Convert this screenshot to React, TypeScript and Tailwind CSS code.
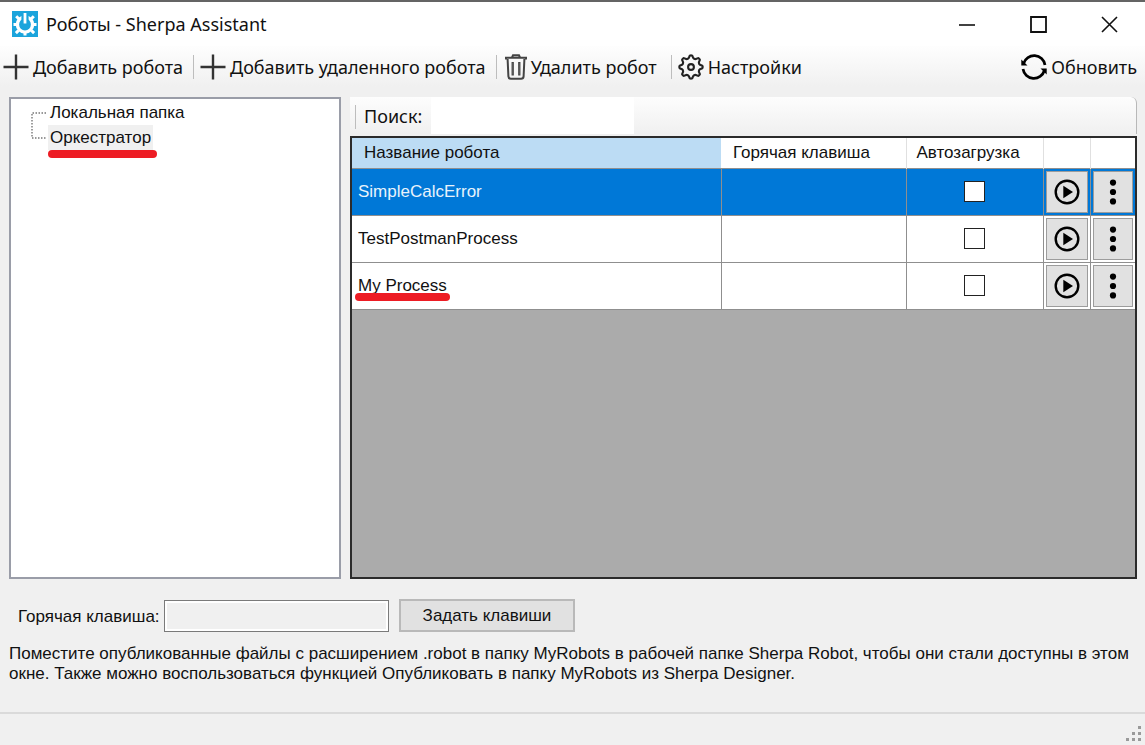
import React from "react";

const robots = [
  { name: "SimpleCalcError", selected: true, marked: false },
  { name: "TestPostmanProcess", selected: false, marked: false },
  { name: "My Process", selected: false, marked: true },
];

function AppLogo() {
  return (
    <svg width="26" height="26" viewBox="0 0 26 26" aria-hidden="true">
      <rect width="26" height="26" fill="#1ba4dc" />
      <circle cx="13" cy="13.5" r="7.6" fill="none" stroke="#fff" strokeWidth="3.4" />
      <path d="M13 21v3.5M6.5 19.5l-2.6 2.6M19.5 19.5l2.6 2.6M5 13.5H1.5M21 13.5h3.5M7 8L4.2 5.2M19 8l2.8-2.8" stroke="#fff" strokeWidth="3" />
      <path d="M9.4 1.5h7.2v9.5H9.4z" fill="#1ba4dc" />
      <path d="M13 2v10.5" stroke="#fff" strokeWidth="2.8" />
    </svg>
  );
}

function PlusIcon() {
  return (
    <svg width="26" height="26" viewBox="0 0 26 26" aria-hidden="true">
      <path d="M13 .5v25M.5 13h25" stroke="#333" strokeWidth="2.4" />
    </svg>
  );
}

function TrashIcon() {
  return (
    <svg width="22" height="26" viewBox="0 0 22 26" fill="none" stroke="#444" aria-hidden="true">
      <path d="M1 5.5V3.8h20v1.7M7 3.5l1-2.2h6l1 2.2" strokeWidth="2" />
      <path d="M2.6 5l.8 17.4c.1 1.5 1 2.4 2.5 2.4h10.2c1.5 0 2.4-.9 2.5-2.4L19.4 5" strokeWidth="2" />
      <path d="M8.3 8.5H7.1v12.5h1.2zM14.9 8.5h-1.2v12.5h1.2z" strokeWidth="1.1" />
    </svg>
  );
}

function gearOutline(teeth: number) {
  const step = (2 * Math.PI) / teeth;
  let d = "";
  for (let i = 0; i < teeth; i++) {
    const a = i * step - Math.PI / 2;
    const at = (r: number, k: number) =>
      `${(13 + r * Math.cos(a + k * step)).toFixed(2)} ${(13 + r * Math.sin(a + k * step)).toFixed(2)}`;
    d += `${i ? "L" : "M"}${at(9.3, -0.3)}L${at(11.4, -0.14)}Q${at(12, 0)} ${at(11.4, 0.14)}L${at(9.3, 0.3)}Q${at(8.3, 0.5)} ${at(9.3, 0.7)}`;
  }
  return d + "Z";
}

function GearIcon() {
  return (
    <svg width="26" height="26" viewBox="0 0 26 26" fill="none" stroke="#222" strokeWidth="2.1" strokeLinejoin="round" aria-hidden="true">
      <path d={gearOutline(8)} />
      <circle cx="13" cy="13" r="2.9" />
    </svg>
  );
}

function RefreshIcon() {
  return (
    <svg width="26" height="26" viewBox="0 0 26 26" aria-hidden="true">
      <path d="M2.6 9.5A11 11 0 0 1 24 11M23.4 16.5A11 11 0 0 1 2 15" fill="none" stroke="#000" strokeWidth="2.7" />
      <path d="M0.3 5.5v6h6.2zM25.7 20.5v-6h-6.2z" fill="#000" />
    </svg>
  );
}

function PlayIcon() {
  return (
    <svg width="26" height="26" viewBox="0 0 26 26" aria-hidden="true">
      <circle cx="13" cy="13" r="11.3" fill="none" stroke="#000" strokeWidth="2.4" />
      <path d="M9.3 6.8L19 13l-9.7 6.2z" fill="#000" />
    </svg>
  );
}

function DotsIcon() {
  return (
    <svg width="8" height="26" viewBox="0 0 8 26" aria-hidden="true">
      <circle cx="4" cy="3.6" r="3.1" />
      <circle cx="4" cy="13" r="3.1" />
      <circle cx="4" cy="22.4" r="3.1" />
    </svg>
  );
}

function ToolButton({ icon, children }: { icon: React.ReactNode; children: React.ReactNode }) {
  return (
    <button className="flex items-center gap-1 whitespace-nowrap">
      {icon}
      <span>{children}</span>
    </button>
  );
}

function Separator() {
  return <span className="h-6 w-px bg-[#bdbdbd]" />;
}

export default function App() {
  return (
    <div className="flex min-h-screen flex-col border-t-2 border-[#646464] bg-[#f0f0f0] font-['Liberation_Sans',Arial,sans-serif] text-[17px] leading-5 text-[#111]">
      <header className="flex h-11 items-center bg-white pl-3 font-['Noto_Sans','Open_Sans',sans-serif] text-lg">
        <AppLogo />
        <h1 className="flex-1 pl-2">Роботы - Sherpa Assistant</h1>
        <div className="flex self-stretch">
          <button aria-label="Свернуть" className="flex w-[71px] items-center justify-center">
            <svg width="17" height="17" viewBox="0 0 17 17"><path d="M0 9h16" stroke="#111" strokeWidth="1.6" /></svg>
          </button>
          <button aria-label="Развернуть" className="flex w-[71px] items-center justify-center">
            <svg width="17" height="17" viewBox="0 0 17 17"><path d="M1 1h15v15H1z" fill="none" stroke="#111" strokeWidth="1.8" /></svg>
          </button>
          <button aria-label="Закрыть" className="flex w-[71px] items-center justify-center">
            <svg width="17" height="17" viewBox="0 0 17 17"><path d="M1 1l15 15M16 1L1 16" stroke="#111" strokeWidth="1.6" /></svg>
          </button>
        </div>
      </header>

      <nav className="flex h-[51px] items-start justify-between bg-linear-to-b from-[#fefefe] to-[#f0f0f0] to-80% pt-[7px] pr-2 pl-[3px] font-['Noto_Sans','Open_Sans',sans-serif] text-lg">
        <div className="flex items-center">
          <ToolButton icon={<PlusIcon />}>Добавить робота</ToolButton>
          <div className="flex items-center gap-[6px] pl-[10px]"><Separator /><ToolButton icon={<PlusIcon />}>Добавить удаленного робота</ToolButton></div>
          <div className="flex items-center gap-2 pl-[10px]"><Separator /><ToolButton icon={<TrashIcon />}>Удалить робот</ToolButton></div>
          <div className="flex items-center gap-[6px] pl-[14px]"><Separator /><ToolButton icon={<GearIcon />}>Настройки</ToolButton></div>
        </div>
        <ToolButton icon={<RefreshIcon />}>Обновить</ToolButton>
      </nav>

      <main className="flex flex-1 gap-[9px] pr-2 pl-[9px]">
        <aside className="w-[332px] shrink-0 border-2 border-[#9a9da8] bg-white pt-px pl-5">
          <div className="flex">
            <svg width="17" height="50" viewBox="0 0 17 50" className="shrink-0" aria-hidden="true">
              <path d="M15 13H1v25h14" fill="none" stroke="#777" strokeWidth="1.4" strokeDasharray="1.5 1.5" />
            </svg>
            <ul className="leading-[25px]">
              <li><button className="px-[2px]">Локальная папка</button></li>
              <li className="relative w-fit">
                <button className="bg-[#f0f0f0] px-[2px]">Оркестратор</button>
                <span className="absolute -right-1 -bottom-2 left-0 h-2 rounded-full bg-[#ed1c24]" />
              </li>
            </ul>
          </div>
        </aside>

        <section className="flex min-w-0 flex-1 flex-col">
          <div className="mb-[2px] flex h-[37px] items-stretch rounded-tr-md border-r border-[#b8b8b8] bg-linear-to-b from-[#fdfdfd] to-[#f0f0f0] pl-[5px]">
            <span className="mt-2 h-6 w-px bg-[#bdbdbd]" />
            <label htmlFor="search" className="w-[75px] self-center pl-2 font-['Noto_Sans','Open_Sans',sans-serif] text-lg">Поиск:</label>
            <input id="search" className="w-[203px] bg-white px-2 outline-none" />
          </div>
          <div className="flex-1 border-2 border-[#2b2b2b] bg-[#ababab]">
            <table className="w-full table-fixed border-collapse">
              <colgroup>
                <col />
                <col className="w-[185px]" />
                <col className="w-[137px]" />
                <col className="w-[47px]" />
                <col className="w-[45px]" />
              </colgroup>
              <thead>
                <tr className="h-[30px] border-b border-[#8f8f8f] bg-white text-left">
                  <th className="bg-[#bcdcf4] pl-3 font-normal">Название робота</th>
                  <th className="border-r border-[#e0e0e0] pl-3 font-normal">Горячая клавиша</th>
                  <th className="border-r border-[#e0e0e0] pl-[10px] font-normal">Автозагрузка</th>
                  <th className="border-r border-[#e0e0e0]" aria-label="Запуск" />
                  <th aria-label="Меню" />
                </tr>
              </thead>
              <tbody>
                {robots.map((r) => (
                  <tr key={r.name} className={r.selected ? "h-[47px] border-b border-[#8f8f8f] bg-[#0078d7] text-[#e8f3fc]" : "h-[47px] border-b border-[#8f8f8f] bg-white"}>
                    <td className="border-r border-[#8f8f8f] pl-[6px]">
                      <span className="relative">
                        {r.name}
                        {r.marked && <span className="absolute -right-[3px] -bottom-[6px] -left-[3px] h-2 rounded-full bg-[#ed1c24]" />}
                      </span>
                    </td>
                    <td className="border-r border-[#8f8f8f]" />
                    <td className="border-r border-[#8f8f8f] text-center">
                      <input type="checkbox" aria-label={`Автозагрузка ${r.name}`} className="size-[21px] appearance-none border border-[#222] bg-white align-middle checked:bg-[#0078d7]" />
                    </td>
                    <td className="border-r border-[#8f8f8f] p-[2px]">
                      <button aria-label={`Запустить ${r.name}`} className="flex h-[42px] w-full items-center justify-center border border-[#9c9c9c] bg-[#e1e1e1] text-[#111]"><PlayIcon /></button>
                    </td>
                    <td className="p-[2px]">
                      <button aria-label={`Меню ${r.name}`} className="flex h-[42px] w-full items-center justify-center border border-[#9c9c9c] bg-[#e1e1e1] text-[#111]"><DotsIcon /></button>
                    </td>
                  </tr>
                ))}
              </tbody>
            </table>
          </div>
        </section>
      </main>

      <div className="flex items-end pt-5 pl-[18px]">
        <label htmlFor="hotkey" className="w-[146px] pb-[5px] whitespace-nowrap">Горячая клавиша:</label>
        <input id="hotkey" readOnly className="h-8 w-[225px] border border-[#7a7a7a] bg-[#f0f0f0] px-2 outline-none ring-2 ring-white ring-inset" />
        <button className="ml-[10px] h-[33px] w-[176px] border-2 border-[#b9b9b9] bg-[#e1e1e1]">Задать клавиши</button>
      </div>
      <p className="px-[9px] pt-3 pb-7 leading-5">
        Поместите опубликованные файлы с расширением .robot в папку MyRobots в рабочей папке Sherpa Robot, чтобы они стали доступны в этом окне. Также можно воспользоваться функцией Опубликовать в папку MyRobots из Sherpa Designer.
      </p>
      <footer className="flex h-[33px] items-end justify-end border-t-2 border-[#dadada] pr-[2px] pb-[2px]">
        <svg width="18" height="18" viewBox="0 0 18 18" fill="#9a9a9a" aria-hidden="true">
          <path d="M13 1h3v3h-3zM7 7h3v3H7zM13 7h3v3h-3zM1 13h3v3H1zM7 13h3v3H7zM13 13h3v3h-3z" />
        </svg>
      </footer>
    </div>
  );
}
